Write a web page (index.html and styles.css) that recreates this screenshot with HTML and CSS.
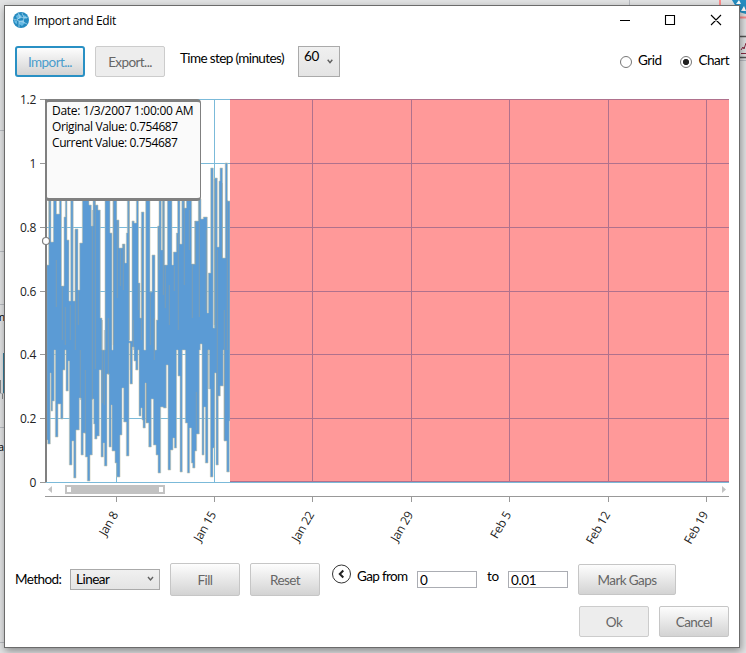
FILE: index.html
```
<!DOCTYPE html>
<html lang="en">
<head>
<meta charset="utf-8">
<title>Import and Edit</title>
<link rel="stylesheet" href="styles.css">
</head>
<body>
<svg class="backdrop" width="746" height="653" viewBox="0 0 746 653">
  <path d="M0 130.5H5M0 251.5H5M0 304.5H5M0 393.5H5M0 427.5H5M0 642.5H5M629.5 0V5M740 60.5H746" stroke="#b9bcc2"/>
  <path d="M3.5 353V393" stroke="#347f9d"/><path d="M.5 380V393M2.5 394V399" stroke="#888"/>
  <text x="-5" y="321">m</text><text x="-2" y="451">a</text>
  <path d="M720 0V5M740 17.5H746" stroke="#ff8c8c" stroke-width="2"/>
  <path d="M732 0H746V14L739 12Z" fill="#258dc1"/>
  <path d="M736 4L739 0L741 4ZM741 11L744 6L746 11Z" fill="#fff"/>
  <path d="M740 36.5H746M740 57.5H746" stroke="#555" stroke-width="1.5"/>
  <path d="M741 50L743 47L744 49L746 43M741 53.5H746" stroke="#8b2942" fill="none"/>
</svg>
<main class="dialog">
  <header class="titlebar">
    <svg class="logo" width="16" height="16" viewBox="0 0 16 16"><circle cx="8" cy="8" r="8" fill="#258abf"/><path d="M3 4L6 2L9 4L7 7L4 7ZM10 3L13 4L14 7L11 6ZM1 8L4 9L4 12L2 11ZM6 9L10 8L12 11L9 14L6 12Z" fill="#65b9e4"/><path d="M0 7L4 8L7 5L5 1M7 5L11 6L15 5M11 6L10 10L6 9L4 8M6 9L6 15M10 10L14 12M9 1L11 6" fill="none" stroke="#c5e4f3" stroke-width=".6"/></svg>
    <span class="title">Import and Edit</span>
    <svg class="controls" width="106" height="14" viewBox="0 0 106 14"><path d="M2 7.5H12M47.5 2.5H56.5V11.5H47.5ZM93 2L103 12M103 2L93 12" fill="none" stroke="#000" stroke-width="1.1"/></svg>
  </header>
  <section class="toolbar">
    <button class="btn focused">Import...</button>
    <button class="btn disabled">Export...</button>
    <span class="step-label">Time step (minutes)</span>
    <div class="combo step"><span>60</span><svg width="6" height="5" viewBox="0 0 6 5"><path d="M.7.7L3 3.6L5.3.7" fill="none" stroke="#606060" stroke-width="1.4"/></svg></div>
    <div class="views">
      <label class="radio"><i></i><span>Grid</span></label>
      <label class="radio on"><i></i><span>Chart</span></label>
    </div>
  </section>
  <section class="chart">
    <svg id="plot" width="734" height="470" viewBox="5 90 734 470">
      <g class="grid"><path d="M46 99.5H729M46 163.5H729M46 227.5H729M46 291.5H729M46 354.5H729M46 418.5H729M46 482.5H729M116.5 99V482M214.5 99V482M312.5 99V482M411.5 99V482M509.5 99V482M608.5 99V482M706.5 99V482"/></g>
      <path id="series"/><path id="original"/>
      <rect x="230" y="99" width="499" height="383" fill="#f99"/>
      <path class="redgrid" d="M230 99.5H729M230 163.5H729M230 227.5H729M230 291.5H729M230 354.5H729M230 418.5H729M230 481.5H729M312.5 99V482M411.5 99V482M509.5 99V482M608.5 99V482M706.5 99V482"/>
      <path class="ticks" d="M40 99.5H46M40 163.5H46M40 227.5H46M40 291.5H46M40 354.5H46M40 418.5H46M40 482.5H46M45 496.5H729M116.5 497V502M214.5 497V502M312.5 497V502M411.5 497V502M509.5 497V502M608.5 497V502M706.5 497V502"/>
      <path d="M46 99V482" stroke="#808080" stroke-width="2"/>
      <circle cx="46" cy="241" r="3.5" fill="#fff" stroke="#808080" stroke-width="1.2"/>
      <g class="ylabels"><text x="36" y="104">1.2</text><text x="36" y="168">1</text><text x="36" y="232">0.8</text><text x="36" y="296">0.6</text><text x="36" y="359">0.4</text><text x="36" y="423">0.2</text><text x="36" y="487">0</text></g>
      <g class="xlabels"><text transform="translate(118.5 514.5) rotate(-60)">Jan 8</text><text transform="translate(216.5 514.5) rotate(-60)">Jan 15</text><text transform="translate(314.5 514.5) rotate(-60)">Jan 22</text><text transform="translate(413.5 514.5) rotate(-60)">Jan 29</text><text transform="translate(511.5 514.5) rotate(-60)">Feb 5</text><text transform="translate(610.5 514.5) rotate(-60)">Feb 12</text><text transform="translate(708.5 514.5) rotate(-60)">Feb 19</text></g>
      <path d="M52 486V493L48 489.5ZM722 486V493L726 489.5ZM65 485H165V494H65Z" fill="#c2c2c2"/>
      <path d="M67 487H71V492H67ZM159 487H163V492H159Z" fill="#fff"/>
    </svg>
    <div class="tooltip"><p class="date">Date: 1/3/2007 1:00:00 AM</p><p>Original Value: 0.754687</p><p>Current Value: 0.754687</p></div>
  </section>
  <section class="actions">
    <span class="method">Method:</span>
    <div class="combo linear"><span>Linear</span><svg width="7" height="6" viewBox="0 0 7 6"><path d="M1 1L3.5 4L6 1" fill="none" stroke="#606060" stroke-width="1.4"/></svg></div>
    <button class="btn tall">Fill</button>
    <button class="btn tall">Reset</button>
    <svg class="back" width="20" height="20" viewBox="0 0 20 20"><circle cx="10.5" cy="10" r="9" fill="#fff" stroke="#333"/><path d="M12.3 6.5L8.8 10L12.3 13.5" fill="none" stroke="#222" stroke-width="2"/></svg>
    <span class="gap">Gap from</span>
    <input class="from" value="0" aria-label="Gap from">
    <span class="to">to</span>
    <input class="until" value="0.01" aria-label="Gap to">
    <button class="btn mark">Mark Gaps</button>
  </section>
  <footer class="footer"><button class="btn disabled">Ok</button><button class="btn">Cancel</button></footer>
</main>
<script src="chart.js"></script>
</body>
</html>
```
FILE: styles.css
```
* { box-sizing: border-box; }
body { margin: 0; width: 746px; height: 653px; overflow: hidden; background: #e2e3e4; font: 13.5px Lato, "Liberation Sans", sans-serif; color: #000; }
.backdrop { position: absolute; left: 0; top: 0; z-index: -1; font: 11px "Open Sans", sans-serif; }
.dialog { width: 736px; height: 643px; margin: 5px 0 0 4px; border: 1px solid #6b6b6b; background: #fff; box-shadow: 1px 3px 8px rgba(0,0,0,.4); display: flex; flex-direction: column; }
.titlebar { height: 40px; flex: none; display: flex; align-items: flex-start; padding: 6px 15px 0 8px; }
.title { font: 12px/17px "Open Sans", sans-serif; letter-spacing: -.35px; margin-left: 5px; }
.controls { margin-left: auto; margin-top: 1px; }
.toolbar { height: 44px; flex: none; display: flex; align-items: flex-start; padding-left: 10px; }
.btn { width: 70px; height: 31px; flex: none; padding: 0; font: 13.5px Lato, sans-serif; letter-spacing: -.6px; color: #666; border: 1px solid #c6c6c6; border-radius: 2px; background: linear-gradient(#fdfdfd, #d3d3d3); }
.toolbar .btn + .btn { margin-left: 10px; }
.btn.focused { color: #4b9dcc; border: 2px solid #2990c4; border-radius: 3px; }
.btn.disabled { background: #ededed; border-color: #ccc; }
.step-label { margin: 4px 0 0 15px; width: 118px; line-height: 17px; white-space: nowrap; letter-spacing: -.62px; }
.combo { flex: none; border: 1px solid #aaa; background: linear-gradient(#f0f0f0, #e4e4e4); display: flex; justify-content: space-between; }
.step { width: 42px; height: 31px; padding: 1px 6px 0 5px; line-height: 17px; letter-spacing: -.4px; }
.step svg { margin-top: 11px; }
.views { margin-left: auto; display: flex; padding: 6px 10px 0 0; gap: 19px; }
.radio { display: flex; align-items: flex-start; line-height: 17px; letter-spacing: -.5px; }
.radio i { width: 12px; height: 12px; border: 1px solid #777; border-radius: 50%; margin: 4px 6px 0 0; }
.radio.on i { background: radial-gradient(circle, #222 0 2.8px, #fff 3.3px); }
.chart { height: 470px; flex: none; position: relative; }
.chart svg { display: block; }
.grid path { fill: none; stroke: #7bbad9; }
#series { fill: #5b9bd5; stroke: #c4c4ad; stroke-width: .6; }
#original { fill: none; stroke: #929f9d; stroke-width: .6; }
.redgrid { fill: none; stroke: #b0718d; }
.ticks { fill: none; stroke: #999; }
.ylabels, .xlabels { font: 12px "Open Sans", sans-serif; letter-spacing: -.3px; text-anchor: end; fill: #222; }
.tooltip { position: absolute; left: 40px; top: 9px; width: 156px; height: 102px; border: 3px solid #808080; border-width: 3px 1.5px 3px 2px; border-radius: 4px; background: #fafafa; font: 12px/16px "Open Sans", sans-serif; letter-spacing: -.4px; padding: 1px 0 0 5px; white-space: nowrap; }
.tooltip p { margin: 0; }
.tooltip .date { letter-spacing: -.26px; }
.actions { height: 40px; flex: none; display: flex; align-items: flex-start; padding: 3px 0 0 10px; white-space: nowrap; }
.method { width: 55px; line-height: 16px; margin-top: 8px; letter-spacing: -.6px; }
.linear { width: 90px; height: 21px; margin: 6px 10px 0 0; padding: 0 5px; line-height: 19px; letter-spacing: -.5px; }
.linear svg { margin-top: 6px; }
.tall { height: 33px; margin-right: 10px; }
.back { margin: 1px 0 0 1px; flex: none; }
.gap { width: 60px; margin: 5px 0 0 6px; line-height: 16px; letter-spacing: -.65px; }
input { width: 60px; height: 17px; margin: 8px 0 0; padding: 0 0 0 2px; border: 1px solid #abadb3; border-radius: 0; font: 13.5px/15px Lato, sans-serif; letter-spacing: -.4px; background: #fff; }
.to { width: 21px; margin: 5px 0 0 10px; line-height: 16px; letter-spacing: -.3px; }
.mark { width: 98px; margin: 1px 0 0 10px; }
.footer { display: flex; justify-content: flex-end; gap: 10px; padding: 6px 10px 0 0; }
```
FILE: chart.js
```
// Envelope of the plotted series as [x, y] steps: each y holds until the next x.
const upper = [[46.7,265],[48.7,199],[51,242],[53.3,199],[56.5,214],[59.3,199],[61.5,286],[64,217],[65.3,199],[67,240],[69,301],[70.7,199],[73.2,301],[75,229],[78,290],[79.7,243],[82.3,199],[89,205],[91.3,226],[93,199],[95.3,205],[98,210],[100.3,318],[102,350],[105,199],[110,233],[112,350],[113,199],[116.7,220],[119,248],[122.3,244],[125,263],[126.3,233],[127.3,199],[129.3,341],[132,221],[134.2,223],[136.3,199],[138.5,283],[140,318],[141.3,212],[144,350],[145.7,199],[150,292],[152,255],[155,350],[156.3,320],[157.7,226],[159,199],[161.3,250],[162.3,199],[164.7,265],[167.3,199],[172,265],[173.3,252],[176.3,233],[177.6,199],[180,244],[181.8,199],[184.3,208],[186.3,199],[191.7,264],[194.7,221],[198.3,199],[201,219],[203.3,217],[207.3,313],[208.3,273],[210.7,168],[213.3,328],[214.7,178],[217.3,247],[219,181],[220,168],[222.6,258],[225.2,163],[227.5,201],[230,201]];
const lower = [[46.7,440],[47.7,444],[50.3,373],[51,411],[52.7,401],[54.3,350],[55.3,437],[58,404],[60.7,419],[63,370],[65,350],[66,391],[68.3,361],[69.3,465],[72,441],[73.7,478],[76,430],[79.3,398],[81,455],[83.3,433],[85.3,457],[87.3,481],[90,455],[92.3,399],[93.7,424],[94.7,439],[97,436],[99.3,370],[101,457],[103.3,443],[104.3,466],[107,374],[109,447],[111.3,405],[112,451],[115,463],[116.7,477],[120,435],[122,388],[123.7,422],[126.3,456],[129,343],[130,384],[132.5,347],[134,361],[135.7,370],[138,350],[139,416],[141,408],[142,420],[143,428],[145.3,383],[146,423],[148.7,447],[151.3,399],[153.3,445],[156,455],[158,473],[160.7,407],[163.3,408],[166.3,365],[168,470],[170.7,450],[173,438],[174.3,448],[176.6,350],[178,376],[180,472],[182.3,350],[185.3,423],[187.3,473],[189.7,428],[191.3,463],[192.7,468],[195,451],[196.7,434],[199.3,350],[200.3,344],[202,455],[204,407],[205.3,463],[208,350],[209.3,389],[210.3,477],[213,448],[214.7,373],[216,465],[218.3,396],[220.3,386],[223.3,350],[224,441],[226.7,472],[229.3,421],[230,421]];
let d = `M${upper[0][0]} ${upper[0][1]}`;
for (let i = 1; i < upper.length; i++) d += `H${upper[i][0]}V${upper[i][1]}`;
for (let i = lower.length - 1; i > 0; i--) d += `V${lower[i-1][1]}H${lower[i-1][0]}`;
document.getElementById('series').setAttribute('d', d + 'Z');
const traces = [[49,200,222],[56,260,307],[62,286,340],[65,307,345],[70,305,340],[75,230,350],[78,291,325],[80,350,400],[85,370,434],[92,210,400],[95,200,369],[102,320,403],[104,330,405],[108,318,375],[113,199,345],[117,221,298],[120,249,286],[123,244,290],[129,199,340],[130,343,370],[133,320,350],[138,284,310],[141,228,340],[146,383,423],[150,293,345],[154,318,360],[159,227,270],[163,200,295],[165,265,308],[169,285,325],[174,266,291],[178,234,330],[184,200,285],[189,210,250],[192,264,318],[195,221,265],[196,392,430],[199,200,317],[206,230,310],[208,350,389],[214,179,325],[217,250,400],[222,183,258],[224,310,440],[227,200,350]];
document.getElementById('original').setAttribute('d', traces.map(t => `M${t[0]+.3} ${t[1]}V${t[2]}`).join(''));
```
